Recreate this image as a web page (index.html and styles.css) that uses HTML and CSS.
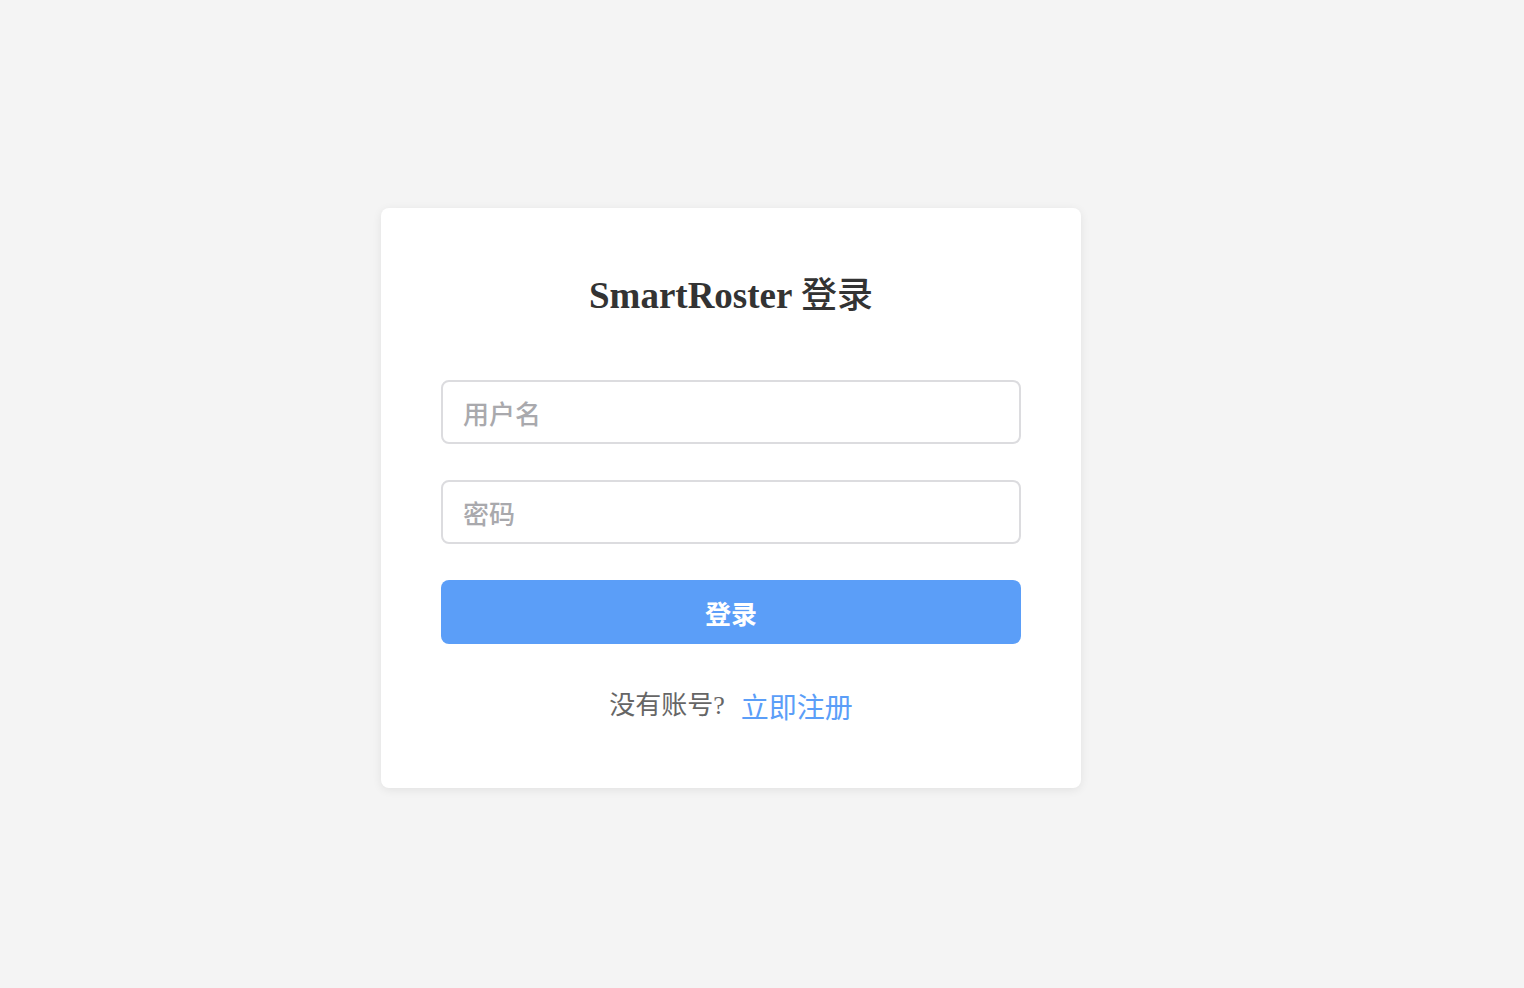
FILE: index.html
```html
<!DOCTYPE html>
<html lang="zh">
<head>
<meta charset="utf-8">
<title>SmartRoster 登录</title>
<link rel="stylesheet" href="styles.css">
</head>
<body>
<div class="page">
  <div class="card">
    <h2 class="title">SmartRoster <span class="title-cjk">登录</span></h2>
    <form class="form">
      <input class="field" type="text" placeholder="用户名">
      <input class="field" type="password" placeholder="密码">
      <button class="submit" type="button">登录</button>
    </form>
    <p class="footer">没有账号?<a class="link" href="#">立即注册</a></p>
  </div>
</div>
</body>
</html>
```
FILE: styles.css
```css
html, body {
  margin: 0;
  padding: 0;
  background: #f4f4f4;
}
.page {
  min-height: 988px;
  box-sizing: border-box;
  display: flex;
  justify-content: center;
  align-items: flex-start;
  padding: 208px 62px 0 0;
}
.card {
  width: 700px;
  box-sizing: border-box;
  background: #fff;
  border-radius: 8px;
  box-shadow: 0 2px 10px rgba(0,0,0,0.08);
  padding: 60px 60px 60px;
  font-family: "Liberation Serif", "Noto Sans CJK SC", serif;
}
.title {
  margin: 0 0 56px;
  text-align: center;
  font-size: 37px;
  line-height: 56px;
  font-weight: bold;
  color: #333;
}
.title-cjk {
  font-weight: 500;
  font-size: 36px;
}
.form {
  display: flex;
  flex-direction: column;
  gap: 36px;
}
.field {
  height: 64px;
  box-sizing: border-box;
  border: 2px solid #dcdcdf;
  border-radius: 8px;
  padding: 0 20px;
  font-family: "Noto Sans CJK SC", sans-serif;
  font-size: 26px;
  color: #333;
  outline: none;
}
.field::placeholder {
  color: #a9a9ad;
  font-weight: 500;
}
.submit {
  height: 64px;
  border: none;
  border-radius: 8px;
  background: #5b9ef8;
  color: #fff;
  font-family: "Noto Sans CJK SC", sans-serif;
  font-weight: bold;
  font-size: 26px;
}
.footer {
  margin: 40px 0 0;
  text-align: center;
  line-height: 44px;
  height: 44px;
  font-size: 26px;
  color: #666;
}
.link {
  color: #5b9ef8;
  text-decoration: none;
  font-size: 28px;
  vertical-align: -4px;
  margin-left: 16px;
}
```
